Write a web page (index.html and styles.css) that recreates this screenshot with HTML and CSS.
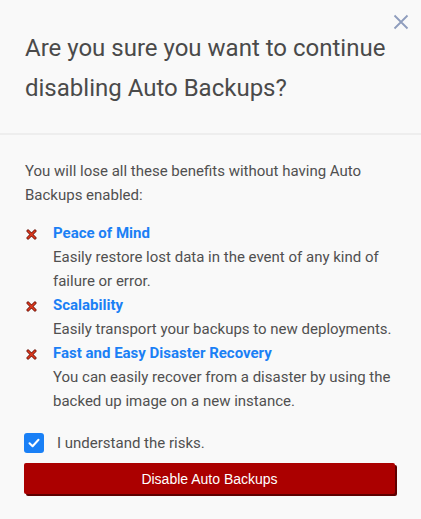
FILE: index.html
```html
<!DOCTYPE html>
<html>
<head>
<meta charset="utf-8">
<link rel="stylesheet" href="styles.css">
</head>
<body>
<div class="dialog">
  <button class="close" aria-label="Close">
    <svg width="16" height="16" viewBox="0 0 16 16"><path d="M1.5 1.5 L14.5 14.5 M14.5 1.5 L1.5 14.5" stroke="#8f9dbd" stroke-width="1.8" fill="none"/></svg>
  </button>
  <div class="header">
    <h1 class="title">Are you sure you want to continue disabling Auto Backups?</h1>
  </div>
  <div class="body">
    <p class="intro">You will lose all these benefits without having Auto Backups enabled:</p>
    <ul class="benefits">
      <li class="benefit">
        <span class="icon"><svg width="11" height="11" viewBox="0 0 12 12"><path d="M2.2 2.2 L9.8 9.8 M9.8 2.2 L2.2 9.8" stroke="#6e160c" stroke-width="3.4" stroke-linecap="round" fill="none"/><path d="M2.2 2.2 L9.8 9.8 M9.8 2.2 L2.2 9.8" stroke="#de3a1f" stroke-width="1.8" stroke-linecap="round" fill="none"/></svg></span>
        <div class="benefit-text">
          <div class="benefit-title">Peace of Mind</div>
          <div class="benefit-desc">Easily restore lost data in the event of any kind of failure or error.</div>
        </div>
      </li>
      <li class="benefit">
        <span class="icon"><svg width="11" height="11" viewBox="0 0 12 12"><path d="M2.2 2.2 L9.8 9.8 M9.8 2.2 L2.2 9.8" stroke="#6e160c" stroke-width="3.4" stroke-linecap="round" fill="none"/><path d="M2.2 2.2 L9.8 9.8 M9.8 2.2 L2.2 9.8" stroke="#de3a1f" stroke-width="1.8" stroke-linecap="round" fill="none"/></svg></span>
        <div class="benefit-text">
          <div class="benefit-title">Scalability</div>
          <div class="benefit-desc">Easily transport your backups to new deployments.</div>
        </div>
      </li>
      <li class="benefit">
        <span class="icon"><svg width="11" height="11" viewBox="0 0 12 12"><path d="M2.2 2.2 L9.8 9.8 M9.8 2.2 L2.2 9.8" stroke="#6e160c" stroke-width="3.4" stroke-linecap="round" fill="none"/><path d="M2.2 2.2 L9.8 9.8 M9.8 2.2 L2.2 9.8" stroke="#de3a1f" stroke-width="1.8" stroke-linecap="round" fill="none"/></svg></span>
        <div class="benefit-text">
          <div class="benefit-title">Fast and Easy Disaster Recovery</div>
          <div class="benefit-desc">You can easily recover from a disaster by using the backed up image on a new instance.</div>
        </div>
      </li>
    </ul>
    <label class="check">
      <span class="box"><svg width="14" height="14" viewBox="0 0 14 14"><path d="M2.5 7.2 L5.6 10.2 L11.5 3.8" stroke="#fff" stroke-width="2" fill="none" stroke-linecap="round" stroke-linejoin="round"/></svg></span>
      <span class="check-label">I understand the risks.</span>
    </label>
    <button class="danger">Disable Auto Backups</button>
  </div>
</div>
</body>
</html>
```
FILE: styles.css
```css
html, body {
  margin: 0;
  padding: 0;
  background: #f9f9f9;
}
body {
  font-family: Roboto, "Liberation Sans", sans-serif;
  color: #505050;
}
.dialog {
  position: relative;
  width: 421px;
  height: 519px;
  background: #f9f9f9;
}
.close {
  position: absolute;
  top: 14px;
  right: 12px;
  border: 0;
  background: none;
  padding: 0;
  width: 16px;
  height: 16px;
  cursor: pointer;
}
.close svg { display: block; }
.header {
  padding: 28px 30px 25px 25px;
  border-bottom: 2px solid #eeeeee;
}
.title {
  margin: 0;
  font-size: 24px;
  font-weight: 400;
  line-height: 40px;
  color: #4a4a4a;
}
.body {
  padding: 24px 25px 0 25px;
  font-size: 15px;
  line-height: 24px;
}
.intro {
  margin: 0 0 14px 0;
  color: #505050;
}
.benefits {
  list-style: none;
  margin: 0;
  padding: 0;
}
.benefit {
  display: flex;
  align-items: flex-start;
}
.icon {
  width: 28px;
  flex: none;
  padding-top: 8px;
  padding-left: 1px;
  box-sizing: border-box;
}
.icon svg { display: block; }
.benefit-title {
  font-weight: 700;
  color: #1b80f5;
}
.benefit-desc {
  color: #505050;
}
.check {
  display: flex;
  align-items: center;
  margin-top: 18px;
  margin-left: -1px;
}
.box {
  width: 20px;
  height: 20px;
  border-radius: 3px;
  background: #1a80f6;
  display: flex;
  align-items: center;
  justify-content: center;
  flex: none;
}
.check-label {
  margin-left: 13px;
  color: #505050;
}
.danger {
  display: block;
  margin-top: 8px;
  margin-left: -1px;
  width: 371px;
  height: 31px;
  border: 0;
  border-radius: 2px;
  background: #ab0000;
  color: #ffffff;
  font-family: "Liberation Sans", Arial, sans-serif;
  font-size: 14px;
  box-shadow: 2px 2px 0 #5e0000;
  cursor: pointer;
}
```
